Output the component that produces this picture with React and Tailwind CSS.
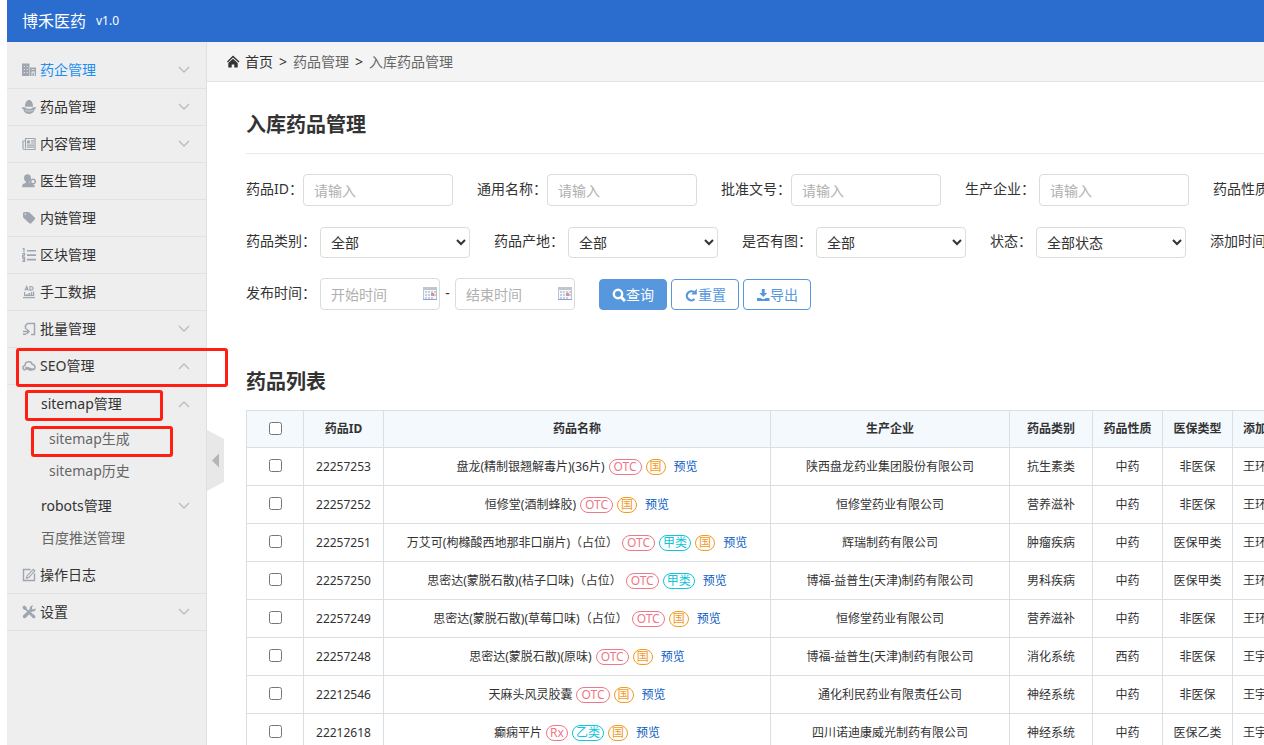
import React, { useState } from "react";

const menus = [
  { icon: "building", label: "药企管理", active: true, arrow: "down" },
  { icon: "drug", label: "药品管理", arrow: "down" },
  { icon: "news", label: "内容管理", arrow: "down" },
  { icon: "doctor", label: "医生管理" },
  { icon: "tag", label: "内链管理" },
  { icon: "list", label: "区块管理" },
  { icon: "data", label: "手工数据" },
  { icon: "batch", label: "批量管理", arrow: "down" },
  { icon: "cloud", label: "SEO管理", arrow: "up", marked: true, open: true },
  { icon: "edit", label: "操作日志" },
  { icon: "tools", label: "设置", arrow: "down" },
];

const drugs = [
  { id: "22257253", name: "盘龙(精制银翘解毒片)(36片)", tags: ["OTC", "国"], company: "陕西盘龙药业集团股份有限公司", type: "抗生素类", nature: "中药", insurance: "非医保", user: "王环" },
  { id: "22257252", name: "恒修堂(酒制蜂胶)", tags: ["OTC", "国"], company: "恒修堂药业有限公司", type: "营养滋补", nature: "中药", insurance: "非医保", user: "王环" },
  { id: "22257251", name: "万艾可(枸橼酸西地那非口崩片)（占位）", tags: ["OTC", "甲类", "国"], company: "辉瑞制药有限公司", type: "肿瘤疾病", nature: "中药", insurance: "医保甲类", user: "王环" },
  { id: "22257250", name: "思密达(蒙脱石散)(桔子口味)（占位）", tags: ["OTC", "甲类"], company: "博福-益普生(天津)制药有限公司", type: "男科疾病", nature: "中药", insurance: "医保甲类", user: "王环" },
  { id: "22257249", name: "思密达(蒙脱石散)(草莓口味)（占位）", tags: ["OTC", "国"], company: "恒修堂药业有限公司", type: "营养滋补", nature: "中药", insurance: "非医保", user: "王环" },
  { id: "22257248", name: "思密达(蒙脱石散)(原味)", tags: ["OTC", "国"], company: "博福-益普生(天津)制药有限公司", type: "消化系统", nature: "西药", insurance: "非医保", user: "王宇" },
  { id: "22212546", name: "天麻头风灵胶囊", tags: ["OTC", "国"], company: "通化利民药业有限责任公司", type: "神经系统", nature: "中药", insurance: "非医保", user: "王宇" },
  { id: "22212618", name: "癫痫平片", tags: ["Rx", "乙类", "国"], company: "四川诺迪康威光制药有限公司", type: "神经系统", nature: "中药", insurance: "医保乙类", user: "王宇" },
];

const tagColors = {
  OTC: "border-[#ee7788] text-[#ee7788] px-1",
  Rx: "border-[#ee7788] text-[#ee7788] px-[3px]",
  甲类: "border-[#12c5dc] text-[#12c5dc] px-[3px]",
  乙类: "border-[#12c5dc] text-[#12c5dc] px-[3px]",
  国: "border-[#f39a1e] text-[#f39a1e] px-[3px]",
};

const shapes = {
  building: (
    <>
      <path fillRule="evenodd" d="M0 .5h7.500v12.500H0zM1.800 3v1h1V3zM4.700 3v1h1V3zM1.800 6v1h1V6zM4.700 6v1h1V6zM1.800 9v1h1V9zM4.700 9v1h1V9z" />
      <path fillRule="evenodd" d="M8 4.500h6v8.500h-1.300V8.500H9.500V13H8zM9.500 6v.8h3V6z" />
      <path d="M10.400 9.700h1.500V13h-1.500z" />
    </>
  ),
  drug: (
    <>
      <path d="M3 6.800C3 2.300 4.800 0 7 0s4 2.300 4 6.800z" />
      <path d="M0 7.200h3c.8 1.200 2 1.500 4 1.500s3.200-.3 4-1.500h3v1.500h-1.200c-.5 3-2.300 5.200-5.800 5.200S1.700 11.700 1.200 8.700H0z" />
      <path d="M3 10.200c2.500 1.200 5.500 1.200 8 0" fill="none" stroke="#eee" strokeWidth="0.600" />
    </>
  ),
  news: (
    <>
      <path d="M3.500 1.500h9.500v11H2.500c-1 0-1.500-.6-1.500-1.500V4h2.500zM3.500 4v7.500" fill="none" stroke="currentColor" strokeWidth="1.200" />
      <path d="M5 3.500h3v3H5zM9 3.300h3v1.200H9zM9 5.400h3v1.200H9zM5 7.500h7v1.200H5zM5 9.600h7v1.200H5z" />
    </>
  ),
  doctor: (
    <>
      <path d="M5.500.3c2.200 0 3.500 1.500 3.500 3.900 0 1.500-.6 2.700-1.500 3.500-.3.700 0 1 .7 1.300l1.500.7c.6 1.200 1.300 2 2 3.500H0c0-2.700 1-3.500 3.500-4.200.6-.2.700-.8.300-1.300C2.700 6.800 2 5.700 2 4.200 2 1.800 3.300.3 5.500.3z" />
      <circle cx="11" cy="7.500" r="2.300" fill="none" stroke="currentColor" strokeWidth="1.500" />
      <path d="M9 8.500l4.300 3.700-1.300 1-3.500-3z" />
    </>
  ),
  tag: <path fillRule="evenodd" d="M1 2.500C1 1.700 1.600 1 2.500 1H6c.6 0 1 .2 1.500.6l5.200 5c.6.600.6 1.300 0 1.900l-3.500 3.700c-.6.600-1.300.6-1.900 0L1.600 7C1.200 6.500 1 6 1 5.500zM3.300 2.500a.8.800 0 100 1.600.8.800 0 000-1.600z" />,
  list: (
    <>
      <path d="M5 2h9v1.600H5zM5 6.300h9v1.600H5zM5 10.800h9v1.600H5z" />
      <path d="M.6 1L2 .5v4M.3 5.500h2.200v1.700H.6V9h2.500M.3 10.200h2.300v3.200H.3M.8 11.800h1.700" fill="none" stroke="currentColor" strokeWidth="1.200" />
    </>
  ),
  data: (
    <>
      <path d="M3 5.500L4.700 1.500l1.600 4M3.600 4.300h2.100M8 1.500v3.700h1c2.700 0 2.700-3.700 0-3.700z" fill="none" stroke="currentColor" strokeWidth="1.200" />
      <path d="M1 12h12v1.200H1zM2 7h1.200v4H2zM4.200 9h1.500v2H4.200zM6.500 8H8v3H6.500zM8.800 7h1.500v4H8.800zM11 6.500h1.200V11H11z" />
      <path d="M2 10.500h10" stroke="currentColor" strokeWidth="1.200" />
    </>
  ),
  batch: (
    <path d="M3.500 7V3.500L5.500 1.500H12.500v11H9M1 9.500h5.500M4.500 7L7 9.500 4.500 12M1 12.300h3" fill="none" stroke="currentColor" strokeWidth="1.500" />
  ),
  cloud: (
    <>
      <path d="M3.500 11C.3 11 .3 7 3 6.500 3 2 9.300 1.500 10.300 5.500c3.500-.2 3.500 5 .3 5.200" fill="none" stroke="currentColor" strokeWidth="1.500" />
      <path d="M3 8.500C5.500 6.500 7 9.500 12 9.500c-1 2.500-4 3-6 1.500-1-.8-2-.8-3 0z" />
    </>
  ),
  edit: (
    <>
      <path d="M8.500 1.500h-7v11h11v-7" fill="none" stroke="currentColor" strokeWidth="1.400" />
      <path d="M11.300 1.300l1.500 1.500L7 9.300l-2.500 1 .6-2.600z" fill="none" stroke="currentColor" strokeWidth="1.200" />
    </>
  ),
  tools: (
    <>
      <path d="M1 1.300l1.500-.8 2.200 1.900v1.300l2.300 2.300-1.200 1.200L3.500 5H2.300L.4 3z" />
      <path d="M8 7.500l4.500 3.500c.7.700 0 2.300-1.300 1.500L7.300 8.500z" stroke="currentColor" strokeWidth="1.300" />
      <path d="M13.500 3.300L11.600 4.500 10 3.800V2.300L11.300.6C9.300 0 7.300 1.500 7.800 4L1.300 10.300c-1.500 1.600.9 3.900 2.500 2.500L10 6.500c2.400.4 4.100-1.100 3.500-3.200z" />
    </>
  ),
};

function MenuIcon({ name }) {
  return (
    <svg viewBox="0 0 14 14" className="h-3.5 w-3.5 shrink-0 text-[#a0a6b0]" fill="currentColor">
      {shapes[name]}
    </svg>
  );
}

function Arrow({ up }) {
  return (
    <svg viewBox="0 0 12 9" className="ml-auto h-[9px] w-3 shrink-0" fill="none" stroke="#bbb" strokeWidth="1.300">
      <path d={up ? "M1 7l5-5 5 5" : "M1 1l5 5 5-5"} />
    </svg>
  );
}

function Calendar() {
  return (
    <svg viewBox="0 0 14 14" className="pointer-events-none absolute right-[3px] top-[9px] h-3.5 w-3.5">
      <rect x="0.500" y="0.500" width="13" height="12" fill="#f6f8fd" stroke="#b9c3da" />
      <rect x="0" y="0" width="14" height="3" fill="#c2c5ca" />
      <path d="M2 4h2v2H2zM5 4h2v2H5zM8 4h2v2H8zM11 4h2v2h-2zM2 7h2v2H2zM5 7h2v2H5zM11 7h2v2h-2zM2 10h2v2H2zM5 10h2v2H5zM8 10h2v2H8z" fill="#c3d0ea" />
      <rect x="8" y="6" width="3" height="3" fill="#ec8f70" />
      <path d="M0 12.500h14" stroke="#8fa3cc" />
    </svg>
  );
}

function Mark({ className }) {
  return (
    <span
      className={`pointer-events-none absolute z-20 rounded-[3px] border-3 border-[#ff1f12] ${className}`}
    />
  );
}

function SubMenu() {
  return (
    <div className="pb-1.5">
      <a href="#" className="relative flex h-[38px] items-center pl-[34px] pr-4">
        sitemap管理
        <Arrow up />
        <Mark className="left-[18px] top-[5px] h-[31px] w-[138px]" />
      </a>
      <a href="#" className="relative flex h-8 items-center pl-[42px] text-[#666]">
        sitemap生成
        <Mark className="left-6 top-[3px] h-[31px] w-[142px]" />
      </a>
      <a href="#" className="flex h-8 items-center pl-[42px] text-[#666]">
        sitemap历史
      </a>
      <a href="#" className="flex h-[38px] items-center pl-[34px] pr-4">
        robots管理
        <Arrow />
      </a>
      <a href="#" className="flex h-[26px] items-center pl-[34px] text-[#666]">
        百度推送管理
      </a>
    </div>
  );
}

function Sidebar() {
  return (
    <aside className="relative w-[200px] shrink-0 border-r border-[#e0e0e0] bg-[#eee] pt-2.5">
      {menus.map((item) => (
        <div key={item.label}>
          <a
            href="#"
            className={`relative flex h-[37px] items-center gap-1 border-b border-[#e2e2e2] pl-[15px] pr-4 ${
              item.active ? "text-[#1e8ff0]" : ""
            }`}
          >
            <MenuIcon name={item.icon} />
            {item.label}
            {item.arrow && <Arrow up={item.arrow === "up"} />}
            {item.marked && <Mark className="left-[9px] top-0 h-[39px] w-[212px]" />}
          </a>
          {item.open && <SubMenu />}
        </div>
      ))}
      <button aria-label="收起菜单" className="absolute -right-[18px] top-[388px] z-10">
        <svg viewBox="0 0 17 61" className="h-[61px] w-[17px]">
          <path d="M0 0l17 9v43L0 61z" fill="#e8e8e8" />
          <path d="M12 23.500v14L5 30.500z" fill="#b5b5b5" />
        </svg>
      </button>
    </aside>
  );
}

function Field({ id, label, wide, children }) {
  return (
    <div className="flex shrink-0">
      <label htmlFor={id} className={`h-[30px] whitespace-nowrap leading-[30px] ${wide ? "mr-1" : ""}`}>
        {label}：
      </label>
      {children}
    </div>
  );
}

function TextField({ id, label, wide }) {
  return (
    <Field id={id} label={label} wide={wide}>
      <input
        id={id}
        type="text"
        placeholder="请输入"
        className="h-8 w-[150px] rounded border border-[#dcdcdc] px-2.5 placeholder:text-[#b0b0b0]"
      />
    </Field>
  );
}

function SelectField({ id, label, first = "全部" }) {
  return (
    <Field id={id} label={label} wide>
      <select id={id} className="mt-px h-[31px] w-[150px] rounded border border-[#dcdcdc] bg-white px-1.5">
        <option>{first}</option>
      </select>
    </Field>
  );
}

function DateInput({ id, placeholder }) {
  return (
    <div className="relative">
      <input
        id={id}
        type="text"
        aria-label={placeholder}
        placeholder={placeholder}
        className="h-8 w-[120px] rounded border border-[#dcdcdc] px-2.5 placeholder:text-[#b0b0b0]"
      />
      <Calendar />
    </div>
  );
}

function Filters() {
  return (
    <form className="flex flex-col gap-5 pt-5" onSubmit={(e) => e.preventDefault()}>
      <div className="flex h-8 gap-6">
        <TextField id="drugId" label="药品ID" />
        <TextField id="commonName" label="通用名称" />
        <TextField id="approval" label="批准文号" />
        <TextField id="company" label="生产企业" wide />
        <SelectField id="nature" label="药品性质" />
      </div>
      <div className="flex h-8 gap-6">
        <SelectField id="type" label="药品类别" />
        <SelectField id="origin" label="药品产地" />
        <SelectField id="hasImage" label="是否有图" />
        <SelectField id="status" label="状态" first="全部状态" />
        <Field id="addStart" label="添加时间" wide>
          <DateInput id="addStart" placeholder="开始时间" />
        </Field>
      </div>
      <div className="flex h-8 gap-6">
        <Field id="pubStart" label="发布时间" wide>
          <DateInput id="pubStart" placeholder="开始时间" />
          <span className="w-[15px] text-center leading-[30px]">-</span>
          <DateInput id="pubEnd" placeholder="结束时间" />
        </Field>
        <div className="flex gap-1 pt-px">
          <button className="flex h-[31px] w-[68px] items-center justify-center rounded border border-[#5697dd] bg-[#5697dd] text-white">
            <svg viewBox="0 0 14 14" className="h-3.5 w-3.5" fill="none" stroke="currentColor">
              <circle cx="6" cy="6" r="4.200" strokeWidth="2.400" />
              <path d="M9 9l4 4" strokeWidth="3" />
            </svg>
            查询
          </button>
          <button className="flex h-[31px] w-[68px] items-center justify-center rounded border border-[#5697dd] text-[#5697dd]">
            <svg viewBox="0 0 14 14" className="h-3.5 w-3.5">
              <path d="M10 4.200A4.500 4.500 0 1 0 10.500 11" fill="none" stroke="currentColor" strokeWidth="2.200" />
              <path d="M7.300 6.500h5.500V.8z" fill="currentColor" />
            </svg>
            重置
          </button>
          <button className="flex h-[31px] w-[68px] items-center justify-center rounded border border-[#5697dd] text-[#5697dd]">
            <svg viewBox="0 0 14 14" className="h-3.5 w-3.5" fill="currentColor">
              <path d="M5.800 1h2.900v4h2.500L7.250 9 3.300 5h2.500z" />
              <path d="M1 10h3.700l1.500 1h2.100l1.500-1h3.700v3H1z" />
            </svg>
            导出
          </button>
        </div>
      </div>
    </form>
  );
}

function DrugTable() {
  const [checked, setChecked] = useState([]);
  const allChecked = checked.length === drugs.length;

  const toggle = (id) => {
    setChecked((prev) =>
      prev.includes(id) ? prev.filter((item) => item !== id) : prev.concat(id)
    );
  };

  return (
    <table className="w-[1120px] table-fixed border-collapse text-center text-xs [&_td]:border [&_td]:border-[#dcdfe2] [&_th]:border [&_th]:border-[#dcdfe2]">
      <colgroup>
        <col className="w-[57px]" />
        <col className="w-20" />
        <col className="w-[387px]" />
        <col className="w-[239px]" />
        <col className="w-[83px]" />
        <col className="w-[70px]" />
        <col className="w-[70px]" />
        <col />
      </colgroup>
      <thead>
        <tr className="h-[37px] bg-[#f4f9fe]">
          <th>
            <input
              type="checkbox"
              aria-label="全选"
              className="mx-auto mb-0.5 block"
              checked={allChecked}
              onChange={() => setChecked(allChecked ? [] : drugs.map((d) => d.id))}
            />
          </th>
          <th>药品ID</th>
          <th>药品名称</th>
          <th>生产企业</th>
          <th>药品类别</th>
          <th>药品性质</th>
          <th>医保类型</th>
          <th className="pl-2.5 text-left">添加人</th>
        </tr>
      </thead>
      <tbody>
        {drugs.map((drug) => (
          <tr key={drug.id} className="h-[38px]">
            <td>
              <input
                type="checkbox"
                aria-label={drug.id}
                className="mx-auto mb-0.5 block"
                checked={checked.includes(drug.id)}
                onChange={() => toggle(drug.id)}
              />
            </td>
            <td>{drug.id}</td>
            <td>
              <div className="flex items-center justify-center gap-1">
                <span>{drug.name}</span>
                {drug.tags.map((tag) => (
                  <span key={tag} className={`h-4 rounded-full border leading-[14px] ${tagColors[tag]}`}>
                    {tag}
                  </span>
                ))}
                <a href="#" className="ml-1 text-[#0a5cc4]">
                  预览
                </a>
              </div>
            </td>
            <td>{drug.company}</td>
            <td>{drug.type}</td>
            <td>{drug.nature}</td>
            <td>{drug.insurance}</td>
            <td className="pl-2.5 text-left">{drug.user}</td>
          </tr>
        ))}
      </tbody>
    </table>
  );
}

export default function App() {
  return (
    <div className="flex h-screen flex-col overflow-hidden bg-white pl-[7px] font-['Noto_Sans','Noto_Sans_CJK_SC',sans-serif] text-sm text-[#333]">
      <header className="flex h-[42px] shrink-0 items-center gap-2.5 bg-[#2b6dcf] pl-[15px] text-white">
        <span className="text-base">博禾医药</span>
        <span className="text-xs">v1.0</span>
      </header>
      <div className="flex min-h-0 flex-1">
        <Sidebar />
        <main className="min-w-0 flex-1 overflow-hidden">
          <nav className="flex h-10 items-center gap-1.5 border-b border-[#e3e3e3] bg-[#f4f4f4] pl-5">
            <a href="#" className="flex items-center gap-1">
              <svg viewBox="0 0 14 14" className="h-3.5 w-3.5" fill="currentColor">
                <path d="M6 .5l6.500 6-.9 1L6 2.500 .9 7.500 0 6.500z" />
                <path d="M6 3.700l4.700 4.300v4.500H7.300V9.500H4.700v3H1.300V8z" />
              </svg>
              首页
            </a>
            <span>&gt;</span>
            <a href="#" className="text-[#666]">药品管理</a>
            <span>&gt;</span>
            <a href="#" className="text-[#666]">入库药品管理</a>
          </nav>
          <div className="pl-[39px]">
            <h1 className="flex h-[72px] items-center border-b border-[#ebebeb] pt-3.5 text-xl font-bold">
              入库药品管理
            </h1>
            <Filters />
            <h2 className="mb-3 mt-14 text-xl leading-8 font-bold">药品列表</h2>
            <DrugTable />
          </div>
        </main>
      </div>
    </div>
  );
}
